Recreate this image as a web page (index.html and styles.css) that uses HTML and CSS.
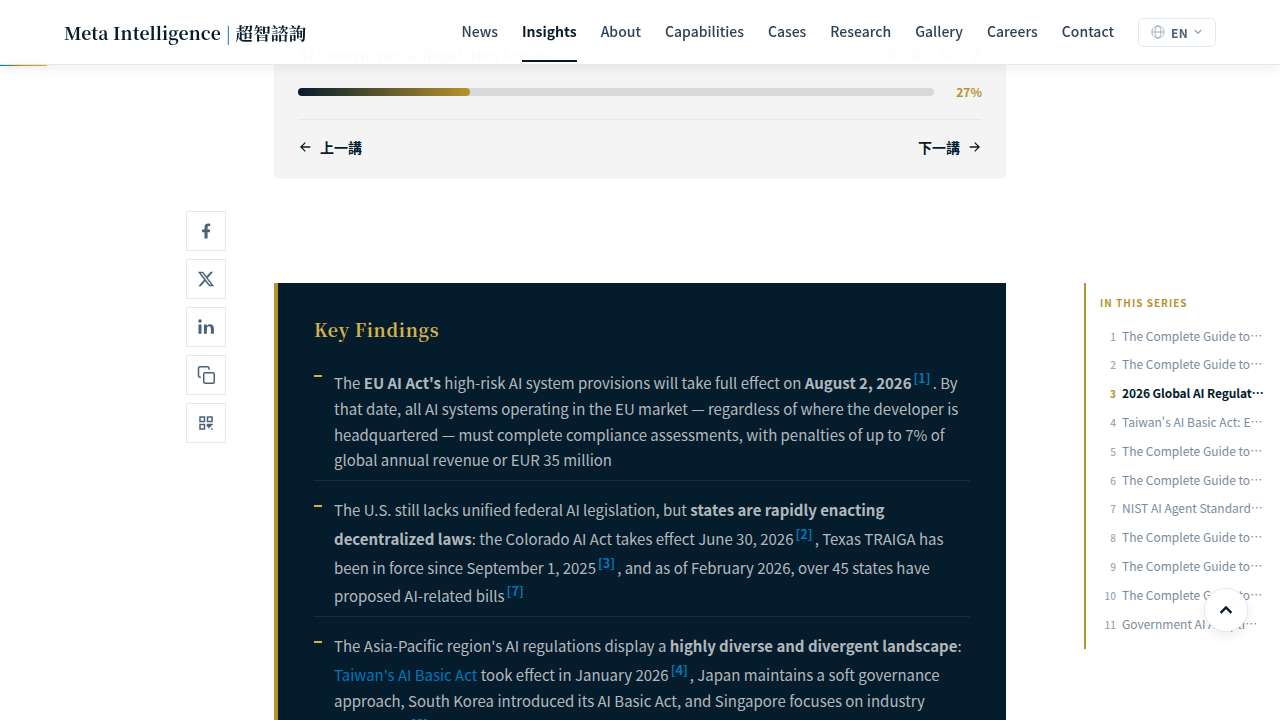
FILE: index.html
```html
<!DOCTYPE html>
<html lang="en">
<head>
<meta charset="utf-8">
<title>Meta Intelligence</title>
<link rel="stylesheet" href="styles.css">
</head>
<body>
<header class="header">
  <a class="logo">Meta Intelligence <span class="logo-bar">|</span> <span class="logo-zh">超智諮詢</span></a>
  <nav class="nav">
    <a>News</a><a class="active">Insights</a><a>About</a><a>Capabilities</a><a>Cases</a><a>Research</a><a>Gallery</a><a>Careers</a><a>Contact</a>
    <button class="lang"><svg width="14" height="14" viewBox="0 0 24 24" fill="none" stroke="currentColor" stroke-width="1.5"><circle cx="12" cy="12" r="10.5"/><ellipse cx="12" cy="12" rx="5" ry="10.5"/><path d="M1.5 12h21"/></svg><span>EN</span><svg class="caret" width="8" height="8" viewBox="0 0 10 10" fill="none" stroke="currentColor" stroke-width="1.7"><path d="M1 2.5l4 4 4-4"/></svg></button>
  </nav>
</header>
<div class="scroll-progress"></div>
<main class="page">
  <aside class="share">
    <a><svg width="18" height="18" viewBox="0 0 24 24" fill="currentColor"><path d="M10 22v-8.500H6.700V9.900H10V7.300C10 3.800 12 2 15 2c1.400 0 2.700.2 2.700.2v3.200h-1.600c-1.600 0-2 .9-2 1.900v2.600h3.500l-.6 3.600h-2.900V22z"/></svg></a>
    <a><svg width="18" height="18" viewBox="0 0 24 24" fill="currentColor"><path d="M18.244 2.25h3.308l-7.227 8.26 8.502 11.24H16.17l-5.214-6.817L4.99 21.75H1.68l7.73-8.835L1.254 2.25H8.08l4.713 6.231zm-1.161 17.52h1.833L7.084 4.126H5.117z"/></svg></a>
    <a><svg width="18" height="18" viewBox="0 0 24 24" fill="currentColor"><path d="M6 21H2V8.500h4zM4 6.200a2.300 2.300 0 1 1 0-4.600 2.300 2.300 0 0 1 0 4.600zM22.500 21h-4v-7c0-4-5.300-3.700-5.300 0v7h-4V8.500h4v2c1.900-3.400 9.300-3.700 9.300 3.300z"/></svg></a>
    <a><svg width="18" height="18" viewBox="0 0 24 24" fill="none" stroke="currentColor" stroke-width="2"><rect x="9" y="9" width="14" height="14" rx="2"/><path d="M5 15H4a2 2 0 0 1-2-2V3a2 2 0 0 1 2-2h10a2 2 0 0 1 2 2v2"/></svg></a>
    <a><svg width="18" height="18" viewBox="0 0 24 24" fill="currentColor"><path fill-rule="evenodd" d="M3 3h8v8H3zm2 2v4h4V5zM13 3h8v8h-8zm2 2v4h4V5zM3 13h8v8H3zm2 2v4h4v-4zM13 13h8v2h-2v2h-2v2h-2v-2h-2zM19 19h2v2h-2z"/></svg></a>
  </aside>
  <article class="article">
    <section class="series">
      <div class="series-head"><b>AI Governance &amp; Regulation Series</b><span>第 3 講 · 共 11 講</span></div>
      <div class="progress"><div class="track"><div class="fill"></div></div><span class="percent">27%</span></div>
      <div class="series-nav">
        <a><svg width="14" height="14" viewBox="0 0 24 24" fill="none" stroke="currentColor" stroke-width="2.2"><path d="M21 12H5M12.500 4.500L5 12l7.500 7.500"/></svg>上一講</a>
        <a>下一講<svg width="14" height="14" viewBox="0 0 24 24" fill="none" stroke="currentColor" stroke-width="2.2"><path d="M3 12h16M11.500 4.500L19 12l-7.500 7.500"/></svg></a>
      </div>
    </section>
    <section class="findings">
      <h2>Key Findings</h2>
      <ul>
        <li>The <strong>EU AI Act's</strong> high-risk AI system provisions will take full effect on <strong>August 2, 2026</strong><sup>[1]</sup>. By that date, all AI systems operating in the EU market — regardless of where the developer is headquartered — must complete compliance assessments, with penalties of up to 7% of global annual revenue or EUR 35 million</li>
        <li>The U.S. still lacks unified federal AI legislation, but <strong>states are rapidly enacting decentralized laws</strong>: the Colorado AI Act takes effect June 30, 2026<sup>[2]</sup>, Texas TRAIGA has been in force since September 1, 2025<sup>[3]</sup>, and as of February 2026, over 45 states have proposed AI-related bills<sup>[7]</sup></li>
        <li>The Asia-Pacific region's AI regulations display a <strong>highly diverse and divergent landscape</strong>: <a>Taiwan's AI Basic Act</a> took effect in January 2026<sup>[4]</sup>, Japan maintains a soft governance approach, South Korea introduced its AI Basic Act, and Singapore focuses on industry innovation<sup>[6]</sup></li>
      </ul>
    </section>
  </article>
  <aside class="toc" lang="zh-TW">
    <h3>IN THIS SERIES</h3>
    <ol>
      <li><i>1</i>The Complete Guide to…</li>
      <li><i>2</i>The Complete Guide to…</li>
      <li class="current"><i>3</i><span>2026 Global AI Regulat…</span></li>
      <li><i>4</i>Taiwan's AI Basic Act: E…</li>
      <li><i>5</i>The Complete Guide to…</li>
      <li><i>6</i>The Complete Guide to…</li>
      <li><i>7</i>NIST AI Agent Standard…</li>
      <li><i>8</i>The Complete Guide to…</li>
      <li><i>9</i>The Complete Guide to…</li>
      <li><i>10</i>The Complete Guide to…</li>
      <li><i>11</i>Government AI Adopti…</li>
    </ol>
  </aside>
</main>
<button class="to-top"><svg width="20" height="20" viewBox="0 0 24 24" fill="none" stroke="currentColor" stroke-width="2.8"><path d="M5.500 15.500L12 9l6.500 6.500"/></svg></button>
</body>
</html>
```
FILE: styles.css
```css
* { box-sizing: border-box; }
body {
  margin: 0;
  height: 720px;
  overflow: hidden;
  background: #fff;
  color: #051c2c;
  font-family: "Noto Sans CJK TC", "Noto Sans", sans-serif;
}
button { font: inherit; }
svg { display: block; flex: none; }

.header {
  position: fixed;
  inset: 0 0 auto 0;
  z-index: 10;
  height: 65px;
  padding: 0 64px;
  display: flex;
  justify-content: space-between;
  background: rgba(255, 255, 255, .985);
  border-bottom: 1px solid #e4e9ed;
  box-shadow: 0 2px 12px rgba(5, 28, 44, .08);
}
.logo {
  font: 700 17.6px/65px "Noto Serif CJK TC", "Noto Serif", "Liberation Serif", serif;
  letter-spacing: .06px;
  white-space: nowrap;
}
.logo-bar { color: #0077b6; font-weight: 500; }
.nav { display: flex; gap: 24px; align-items: center; }
.nav a {
  height: 62px;
  line-height: 62px;
  align-self: flex-start;
  font-size: 13.99px;
  font-weight: 500;
  color: #2c4257;
}
.nav a.active { color: #051c2c; font-weight: 700; border-bottom: 2px solid #051c2c; }
.lang {
  display: flex;
  align-items: center;
  gap: 6px;
  width: 78px;
  height: 29px;
  padding: 0 12px;
  background: transparent;
  border: 1px solid #e4e9ed;
  border-radius: 5px;
  color: #9aa8b5;
  font-size: 12px;
  font-weight: 700;
}
.lang span { color: #4a6278; letter-spacing: .4px; padding-top: 1px; }
.scroll-progress {
  position: fixed;
  z-index: 11;
  top: 65px;
  left: 0;
  width: 47px;
  height: 1px;
  background: linear-gradient(90deg, #0077a8, #b8922e 50%, #d4b050);
  box-shadow: 0 1px 6px rgba(184, 146, 46, .3);
}

.page {
  display: grid;
  grid-template-columns: 40px 732px 196px;
  column-gap: 48px;
  padding-left: 186px;
}
.share { display: flex; flex-direction: column; gap: 8px; padding-top: 211px; }
.share a {
  display: flex;
  align-items: center;
  justify-content: center;
  height: 40px;
  background: #fff;
  border: 1px solid #e4e9ed;
  color: #4a6278;
}

.series {
  height: 179px;
  padding: 40px 24px 0;
  border-radius: 5px;
  background: #f4f4f4;
}
.series-head {
  display: flex;
  justify-content: space-between;
  height: 32px;
  line-height: 30px;
  font-family: "Noto Serif CJK TC", serif;
  font-size: 14px;
}
.series-head span { font-family: "Noto Sans CJK TC", sans-serif; font-size: 12px; }
.progress { display: flex; align-items: center; gap: 12px; height: 40px; }
.track { flex: 1; height: 8px; border-radius: 4px; background: #d9d9d9; }
.fill { width: 27%; height: 8px; border-radius: 4px; background: linear-gradient(90deg, #051c2c, #b8922e); }
.percent { width: 36px; text-align: right; font-size: 12px; line-height: 18px; font-weight: 700; color: #b8922e; }
.series-nav {
  display: flex;
  justify-content: space-between;
  margin-top: 7px;
  padding-top: 16px;
  border-top: 1px solid #e8e8e8;
}
.series-nav a { display: flex; align-items: center; gap: 8px; font-size: 14px; font-weight: 700; line-height: 22px; }

.findings {
  height: 437px;
  overflow: hidden;
  margin-top: 104px;
  padding: 32px 36px 0;
  border-left: 4px solid #b8922e;
  background: #051c2c;
  color: rgba(255, 255, 255, .7);
}
.findings h2 {
  margin: 0 0 14px;
  font: 700 17.8px/30px "Noto Serif CJK TC", "Noto Serif", "Liberation Serif", serif;
  letter-spacing: .68px;
  color: #d4b050;
}
.findings ul { margin: 0; padding: 0; list-style: none; }
.findings li {
  position: relative;
  margin-bottom: 8px;
  padding: 8px 0 7px 20px;
  border-bottom: 1px solid rgba(255, 255, 255, .08);
  font-size: 14.985px;
  line-height: 25.75px;
}
.findings li::before {
  content: "";
  position: absolute;
  left: 0;
  top: 16.4px;
  width: 8px;
  height: 2px;
  background: #d4b050;
}
.findings strong { font-weight: 700; }
.findings sup {
  padding: 0 2px;
  font-size: 12.75px;
  font-weight: 600;
  line-height: 22.7px;
  vertical-align: 6px;
  color: #0077b6;
}
.findings li a { color: #0077b6; }

.toc {
  width: 196px;
  height: 366px;
  margin-top: 283px;
  margin-left: 30px;
  padding: 12px 0 0 14px;
  border-left: 2px solid #b8922e;
}
.toc h3 { margin: 0 0 10.6px; font-size: 10px; line-height: 16px; letter-spacing: 1px; font-weight: 700; color: #b8922e; }
.toc ol { margin: 0; padding: 0; list-style: none; }
.toc li { display: flex; align-items: baseline; gap: 6px; height: 28.8px; line-height: 28.8px; font-size: 12px; color: #7a8c9c; white-space: nowrap; }
.toc i { width: 16px; text-align: right; font-style: normal; font-size: 10px; color: #9aa8b5; font-weight: 500; }
.toc .current { color: #051c2c; font-weight: 700; }
.toc .current span { letter-spacing: -.1px; }
.toc .current i { color: #b8922e; font-weight: 700; }

.to-top {
  position: fixed;
  left: 1204px;
  top: 588px;
  width: 44px;
  height: 44px;
  padding: 0;
  display: flex;
  align-items: center;
  justify-content: center;
  border: 1px solid #e4e9ed;
  border-radius: 50%;
  background: #fff;
  color: #051c2c;
  box-shadow: 0 4px 12px rgba(5, 28, 44, .08);
}
```
